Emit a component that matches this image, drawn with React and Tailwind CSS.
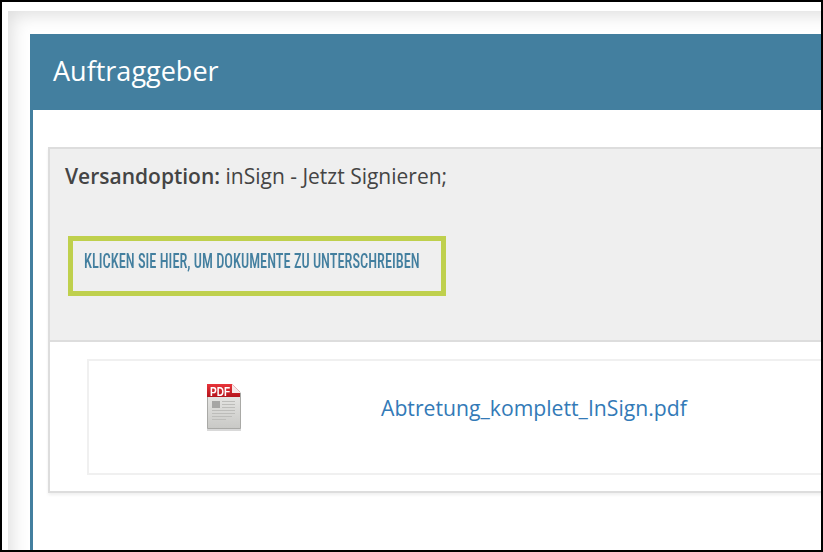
function PdfIcon() {
  return (
    <svg width="38" height="50" viewBox="0 0 38 50" className="block blur-[0.4px]">
      <defs>
        <linearGradient id="pdfPage" x1="0" y1="0" x2="0" y2="1">
          <stop offset="0" stopColor="#eeeeec" />
          <stop offset="1" stopColor="#c9c9c6" />
        </linearGradient>
        <linearGradient id="pdfBand" x1="0" y1="0" x2="0" y2="1">
          <stop offset="0" stopColor="#e8343a" />
          <stop offset="1" stopColor="#b4141c" />
        </linearGradient>
      </defs>
      <rect x="2" y="47" width="34" height="3" fill="#000" opacity="0.15" />
      <path d="M2.500 3.500H27L35.500 12V47.500H2.500Z" fill="url(#pdfPage)" stroke="#a9a9a6" />
      <path d="M2 3H27L35 11V16H2Z" fill="url(#pdfBand)" />
      <path d="M27 3L36 12H27Z" fill="#f6e9e9" />
      <text x="5" y="14.500" fontFamily="'Liberation Sans', sans-serif" fontWeight="700" fontSize="12" textLength="20" lengthAdjust="spacingAndGlyphs" fill="#fff">PDF</text>
      <rect x="7" y="20" width="8" height="7" fill="#a6a6a4" />
      <g fill="#bdbdba">
        <rect x="17" y="20" width="13" height="1" />
        <rect x="17" y="23" width="13" height="1" />
        <rect x="17" y="26" width="13" height="1" />
        <rect x="7" y="29" width="23" height="1" />
        <rect x="7" y="32" width="23" height="1" />
        <rect x="7" y="35" width="20" height="1" />
        <rect x="7" y="38" width="14" height="1" />
      </g>
    </svg>
  );
}

export default function App() {
  return (
    <div className="w-[823px] h-[552px] border-2 border-black bg-white overflow-hidden flex flex-col pt-[9px] pl-[6px] font-['Open_Sans',sans-serif]">
      {/* outer panel, only the soft inner shadow shows */}
      <div className="flex-1 min-h-0 flex flex-col pl-[22px] pt-[23px] shadow-[inset_14px_14px_18px_-10px_#00000022]">
        <div className="h-[76px] shrink-0 bg-[#437f9f] flex items-center pl-[23px]">
          <h1 className="text-[27px] text-white mt-[-2px]">Auftraggeber</h1>
        </div>

        <div className="flex-1 min-h-0 bg-white border-l-[3px] border-[#437f9f] pl-[15px] pt-[37px]">
          <div className="w-[800px] border-2 border-[#dddddd] shadow-[0_2px_3px_#00000010]">
            <div className="h-[193px] bg-[#efefef] border-b-2 border-[#dddddd] pl-[15px] pt-[12px]">
              <p className="text-[21px] leading-[30px] text-[#444444]">
                <b className="font-semibold">Versandoption:</b> inSign - Jetzt Signieren;
              </p>
              <a className="block mt-[45px] ml-[3px] w-[378px] h-[60px] border-[5px] border-[#bfd04d] pl-[11px] pt-[6px] text-[#437f9f] text-[20px] font-medium leading-[28px] uppercase font-['Liberation_Sans_Narrow','Roboto_Condensed',sans-serif]">
                <span className="inline-block whitespace-nowrap origin-left scale-x-[0.72]">
                  Klicken Sie hier, um Dokumente zu unterschreiben
                </span>
              </a>
            </div>
            <div className="pl-[37px] pt-[17px] pb-[16px]">
              <div className="h-[116px] border-2 border-[#f0f0f0] flex items-start">
                <div className="w-[292px] pl-[116px] pt-[20px] shrink-0">
                  <PdfIcon />
                </div>
                <a className="text-[21.200px] leading-[29px] pt-[32px] text-[#337ab7]">Abtretung_komplett_InSign.pdf</a>
              </div>
            </div>
          </div>
        </div>
      </div>
    </div>
  );
}
